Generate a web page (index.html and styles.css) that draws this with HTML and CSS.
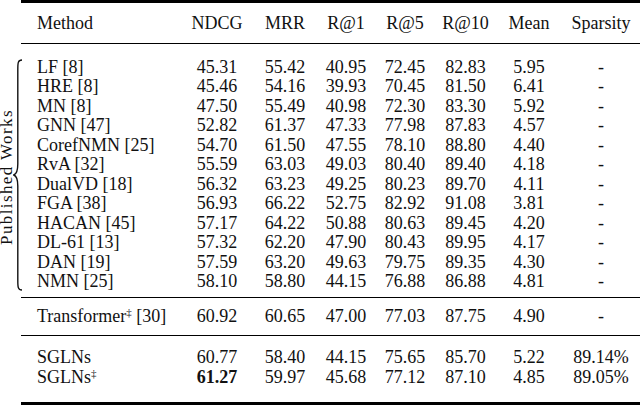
FILE: index.html
```html
<!DOCTYPE html>
<html lang="en">
<head>
    <meta charset="UTF-8">
    <title>Results Table</title>
    <link rel="stylesheet" href="styles.css">
</head>
<body>
    <div class="toprule"></div>
    <table class="results">
        <colgroup>
            <col class="col-side">
            <col class="col-method">
            <col class="col-ndcg">
            <col class="col-mrr">
            <col class="col-r1">
            <col class="col-r5">
            <col class="col-r10">
            <col class="col-mean">
            <col class="col-sparsity">
        </colgroup>
        <thead>
            <tr>
                <th class="side"></th>
                <th class="method">Method</th>
                <th>NDCG</th>
                <th>MRR</th>
                <th>R@1</th>
                <th>R@5</th>
                <th>R@10</th>
                <th>Mean</th>
                <th>Sparsity</th>
            </tr>
        </thead>
        <tbody class="published">
            <tr>
                <td class="side" rowspan="12">
                    <div class="group-label">
                        <span class="label-text">Published Works</span>
                        <svg class="brace" width="9" height="232" viewBox="0 0 9 232">
                            <path d="M9,1 C4.8,1 4.8,4 4.8,11 L4.8,105 C4.8,112 3.5,115 0.8,116 C3.5,117 4.8,120 4.8,127 L4.8,221 C4.8,228 4.8,231 9,231" />
                        </svg>
                    </div>
                </td>
                <td class="method">LF [8]</td>
                <td>45.31</td><td>55.42</td><td>40.95</td><td>72.45</td><td>82.83</td><td>5.95</td><td>-</td>
            </tr>
            <tr>
                <td class="method">HRE [8]</td>
                <td>45.46</td><td>54.16</td><td>39.93</td><td>70.45</td><td>81.50</td><td>6.41</td><td>-</td>
            </tr>
            <tr>
                <td class="method">MN [8]</td>
                <td>47.50</td><td>55.49</td><td>40.98</td><td>72.30</td><td>83.30</td><td>5.92</td><td>-</td>
            </tr>
            <tr>
                <td class="method">GNN [47]</td>
                <td>52.82</td><td>61.37</td><td>47.33</td><td>77.98</td><td>87.83</td><td>4.57</td><td>-</td>
            </tr>
            <tr>
                <td class="method">CorefNMN [25]</td>
                <td>54.70</td><td>61.50</td><td>47.55</td><td>78.10</td><td>88.80</td><td>4.40</td><td>-</td>
            </tr>
            <tr>
                <td class="method">RvA [32]</td>
                <td>55.59</td><td>63.03</td><td>49.03</td><td>80.40</td><td>89.40</td><td>4.18</td><td>-</td>
            </tr>
            <tr>
                <td class="method">DualVD [18]</td>
                <td>56.32</td><td>63.23</td><td>49.25</td><td>80.23</td><td>89.70</td><td>4.11</td><td>-</td>
            </tr>
            <tr>
                <td class="method">FGA [38]</td>
                <td>56.93</td><td>66.22</td><td>52.75</td><td>82.92</td><td>91.08</td><td>3.81</td><td>-</td>
            </tr>
            <tr>
                <td class="method">HACAN [45]</td>
                <td>57.17</td><td>64.22</td><td>50.88</td><td>80.63</td><td>89.45</td><td>4.20</td><td>-</td>
            </tr>
            <tr>
                <td class="method">DL-61 [13]</td>
                <td>57.32</td><td>62.20</td><td>47.90</td><td>80.43</td><td>89.95</td><td>4.17</td><td>-</td>
            </tr>
            <tr>
                <td class="method">DAN [19]</td>
                <td>57.59</td><td>63.20</td><td>49.63</td><td>79.75</td><td>89.35</td><td>4.30</td><td>-</td>
            </tr>
            <tr>
                <td class="method">NMN [25]</td>
                <td>58.10</td><td>58.80</td><td>44.15</td><td>76.88</td><td>86.88</td><td>4.81</td><td>-</td>
            </tr>
        </tbody>
        <tbody class="baseline">
            <tr>
                <td class="side"></td>
                <td class="method">Transformer<sup>&Dagger;</sup> [30]</td>
                <td>60.92</td><td>60.65</td><td>47.00</td><td>77.03</td><td>87.75</td><td>4.90</td><td>-</td>
            </tr>
        </tbody>
        <tbody class="ours">
            <tr>
                <td class="side"></td>
                <td class="method">SGLNs</td>
                <td>60.77</td><td>58.40</td><td>44.15</td><td>75.65</td><td>85.70</td><td>5.22</td><td>89.14%</td>
            </tr>
            <tr>
                <td class="side"></td>
                <td class="method">SGLNs<sup>&Dagger;</sup></td>
                <td class="best">61.27</td><td>59.97</td><td>45.68</td><td>77.12</td><td>87.10</td><td>4.85</td><td>89.05%</td>
            </tr>
        </tbody>
    </table>
</body>
</html>
```

FILE: styles.css
```css
body {
    margin: 0;
    background-color: #ffffff;
    color: #111111;
    font-family: 'Liberation Serif', 'Times New Roman', serif;
}

.toprule {
    height: 3px;
    margin-left: 21px;
    background-color: #000;
}

.results {
    border-collapse: separate;
    border-spacing: 0;
    table-layout: fixed;
    width: 640px;
    font-size: 18px;
    line-height: 18px;
}

.col-side { width: 21px; }
.col-method { width: 160px; }
.col-ndcg { width: 72px; }
.col-mrr { width: 64px; }
.col-r1 { width: 58px; }
.col-r5 { width: 60px; }
.col-r10 { width: 61px; }
.col-mean { width: 66px; }
.col-sparsity { width: 78px; }

th, td {
    height: 19.5px;
    padding: 0;
    text-align: center;
    font-weight: normal;
    white-space: nowrap;
}

th.method, td.method {
    text-align: left;
    padding-left: 16px;
}

/* midrule */
thead th {
    border-bottom: 1px solid #000;
    padding-top: 10px;
    padding-bottom: 10.5px;
}

thead th.side {
    border: none;
}

.published tr:first-child td {
    padding-top: 13px;
}

.published tr:last-child td {
    padding-bottom: 5.5px;
}

.published tr:last-child td:not(.side),
.baseline td:not(.side) {
    border-bottom: 1px solid #000;
}

.baseline td {
    padding-top: 8.5px;
    padding-bottom: 9px;
}

.ours tr:first-child td {
    padding-top: 12px;
}

.ours tr:last-child td {
    padding-bottom: 15px;
}

.ours tr:last-child td:not(.side) {
    border-bottom: 3px solid #000;
}

td.side {
    height: auto;
    vertical-align: top;
}

.group-label {
    display: flex;
    align-items: center;
    height: 232px;
    padding-top: 2px;
}

.label-text {
    flex-shrink: 0;
    writing-mode: vertical-rl;
    transform: rotate(180deg);
    width: 13px;
    font-size: 17px;
    line-height: 13px;
    letter-spacing: 1.4px;
    margin-top: 4px;
}

.brace {
    flex-shrink: 0;
}

.brace path {
    fill: none;
    stroke: #111;
    stroke-width: 1.4;
}

sup {
    font-size: 11px;
    line-height: 0;
    vertical-align: 6px;
}

.best {
    font-weight: bold;
}
```
